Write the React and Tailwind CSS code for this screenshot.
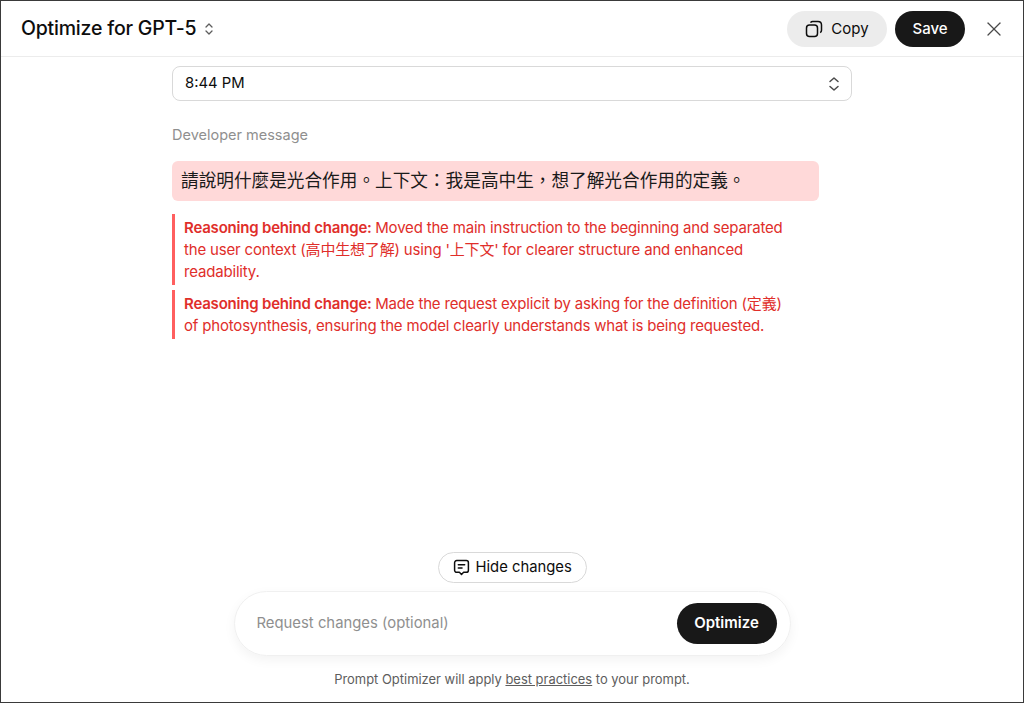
import {X} from "lucide-react";

const fontStack = {fontFamily: 'Inter, "Noto Sans CJK TC", sans-serif'};

const ReasonBlock = ({children}) => (
	<div className="border-l-[3px] border-[#ff5f5f] pl-[9px] pr-[24px] py-[2.5px] text-[15px] leading-[22px] tracking-[-0.18px] text-[#e02e2a]">
		<span className="font-semibold tracking-[-0.2px]">Reasoning behind change: </span>
		{children}
	</div>
);

const App = () => {
	return (
		<div style={fontStack} className="flex flex-col h-[703px] w-[1024px] border border-[#3a3a3a] bg-white text-[#0d0d0d] overflow-hidden">
			<header className="flex items-center justify-between h-[56px] shrink-0 border-b border-[#ececec] pl-5 pr-[17px]">
				<div className="flex items-center gap-[6px]">
					<h1 className="text-[19.5px] font-medium tracking-[-0.2px]">Optimize for GPT-5</h1>
					<svg width="14" height="16" viewBox="0 0 14 16" fill="none" stroke="#5d5d5d" strokeWidth="1.3" strokeLinecap="round" strokeLinejoin="round">
						<path d="M4 6l3-3 3 3"/>
						<path d="M4 10l3 3 3-3"/>
					</svg>
				</div>
				<div className="flex items-center">
					<button className="flex items-center gap-[8px] h-9 w-[100px] justify-center rounded-full bg-[#ececec] text-[15px]">
						<svg width="18" height="18" viewBox="0 0 18 18" fill="none" stroke="#0d0d0d" strokeWidth="1.5">
							<rect x="1.5" y="5" width="11" height="11.5" rx="3"/>
							<path d="M5.5 2.6c.5-.7 1.2-1.1 2.2-1.1h5.3c2 0 3.5 1.5 3.5 3.5v5.3c0 1-.5 1.9-1.3 2.4"/>
						</svg>
						<span className="pt-px">Copy</span>
					</button>
					<button className="ml-[8px] pt-px h-9 w-[70px] rounded-full bg-[#181818] text-white text-[15px] font-medium">Save</button>
					<X className="ml-[17px]" size={24} strokeWidth={1.3} color="#4a4a4a"/>
				</div>
			</header>

			<main className="flex-1 flex flex-col items-center min-h-0">
				<div className="w-[680px] pt-[9px]">
					<div className="flex items-center justify-between h-[35px] rounded-lg border border-[#d9d9d9] pl-3 pr-[10px] text-[14.8px]">
						<span>8:44 PM</span>
						<svg width="14" height="18" viewBox="0 0 14 18" fill="none" stroke="#4a4a4a" strokeWidth="1.5" strokeLinecap="round" strokeLinejoin="round">
							<path d="M3 6.5l4-3.5 4 3.5"/>
							<path d="M3 11.5l4 3.5 4-3.5"/>
						</svg>
					</div>
					<p className="mt-[24px] text-[14.5px] leading-5 text-[#8f8f8f]">Developer message</p>
					<div className="mt-[16px] w-[647px] h-[40px] flex items-center rounded-md bg-[#ffd9d9] pl-[9px] text-[17.65px] text-[#1a1a1a]">
						請說明什麼是光合作用。上下文：我是高中生，想了解光合作用的定義。
					</div>
					<div className="mt-[13px] w-[647px] flex flex-col gap-[5px]">
						<ReasonBlock>Moved the main instruction to the beginning and separated the user context (高中生想了解) using '上下文' for clearer structure and enhanced readability.</ReasonBlock>
						<ReasonBlock>Made the request explicit by asking for the definition (定義) of photosynthesis, ensuring the model clearly understands what is being requested.</ReasonBlock>
					</div>
				</div>
			</main>

			<footer className="flex flex-col items-center shrink-0">
				<button className="flex items-center gap-[6px] h-[31px] pl-[14px] w-[149px] whitespace-nowrap rounded-full border border-[#d9d9d9] text-[14.8px]">
					<svg width="17" height="17" viewBox="0 0 16 16" fill="none" stroke="#0d0d0d" strokeWidth="1.4" strokeLinecap="round" strokeLinejoin="round">
						<path d="M3.5 1.5h9a2 2 0 0 1 2 2v7a2 2 0 0 1-2 2H10l-2 2-2-2H3.5a2 2 0 0 1-2-2v-7a2 2 0 0 1 2-2z"/>
						<path d="M5 5.5h6M5 8.5h3.5"/>
					</svg>
					Hide changes
				</button>
				<div className="mt-[8px] flex items-center justify-between w-[557px] h-[65px] rounded-full border border-[#f0f0f0] shadow-[0_4px_12px_rgba(0,0,0,0.05)] pl-[22px] pr-[13px]">
					<span className="text-[14.85px] text-[#8f8f8f]">Request changes (optional)</span>
					<button className="h-[41px] w-[100px] rounded-full bg-[#181818] text-white text-[15px] font-semibold">Optimize</button>
				</div>
				<p className="mt-[15px] mb-[15px] text-[12.95px] leading-4 text-[#5d5d5d]">
					Prompt Optimizer will apply <span className="underline">best practices</span> to your prompt.
				</p>
			</footer>
		</div>
	);
};

export default App;
